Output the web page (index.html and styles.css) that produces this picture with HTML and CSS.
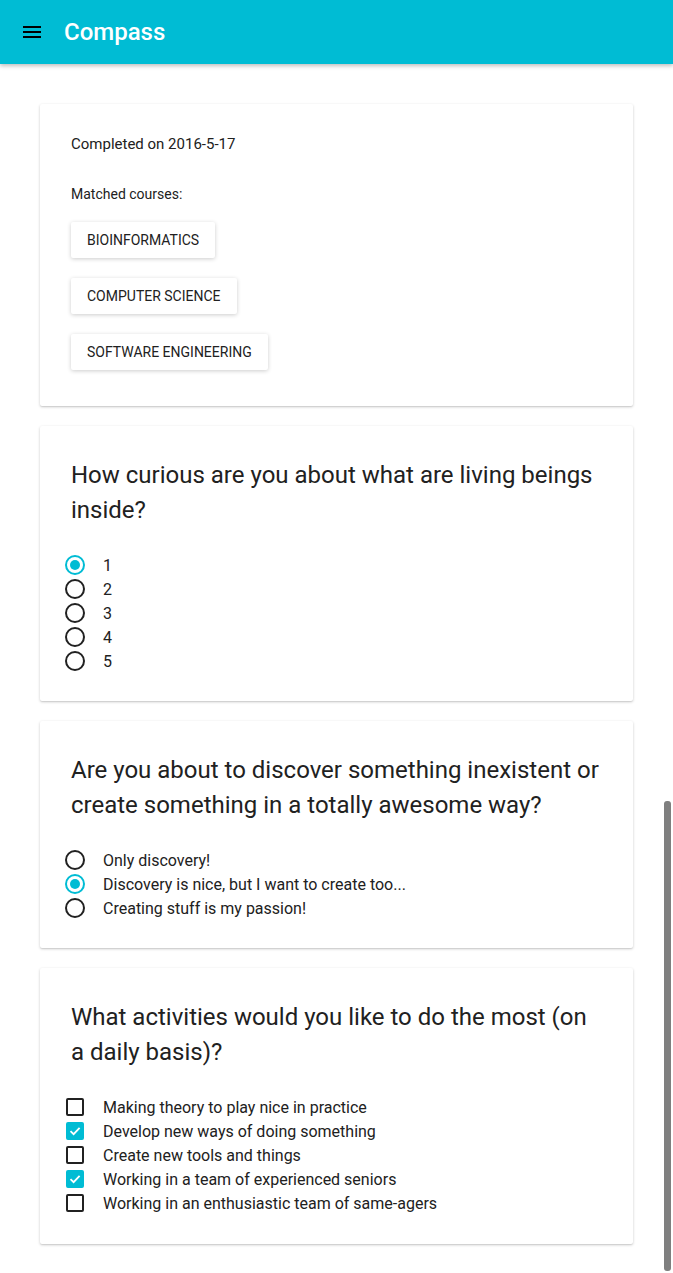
FILE: index.html
```html
<!DOCTYPE html>
<html>
<head>
<meta charset="utf-8">
<link rel="stylesheet" href="styles.css">
</head>
<body>
<header class="appbar">
  <svg class="menu" width="18" height="12" viewBox="0 0 18 12"><rect x="0" y="0" width="18" height="2" fill="#000"/><rect x="0" y="5" width="18" height="2" fill="#000"/><rect x="0" y="10" width="18" height="2" fill="#000"/></svg>
  <span class="title">Compass</span>
</header>
<main class="content">
  <section class="card summary">
    <p class="meta completed">Completed on 2016-5-17</p>
    <p class="meta matched">Matched courses:</p>
    <div class="courses">
      <span class="btn">BIOINFORMATICS</span>
      <span class="btn">COMPUTER SCIENCE</span>
      <span class="btn">SOFTWARE ENGINEERING</span>
    </div>
  </section>

  <section class="card">
    <h2 class="question">How curious are you about what are living beings inside?</h2>
    <ul class="options">
      <li><span class="radio on"></span>1</li>
      <li><span class="radio"></span>2</li>
      <li><span class="radio"></span>3</li>
      <li><span class="radio"></span>4</li>
      <li><span class="radio"></span>5</li>
    </ul>
  </section>

  <section class="card">
    <h2 class="question">Are you about to discover something inexistent or create something in a totally awesome way?</h2>
    <ul class="options">
      <li><span class="radio"></span>Only discovery!</li>
      <li><span class="radio on"></span>Discovery is nice, but I want to create too...</li>
      <li><span class="radio"></span>Creating stuff is my passion!</li>
    </ul>
  </section>

  <section class="card last">
    <h2 class="question">What activities would you like to do the most (on a daily basis)?</h2>
    <ul class="options">
      <li><span class="check"></span>Making theory to play nice in practice</li>
      <li><span class="check on"><svg width="14" height="14" viewBox="0 0 14 14"><path d="M2.5 7.2 L5.6 10.2 L11.6 3.8" fill="none" stroke="#fff" stroke-width="1.8"/></svg></span>Develop new ways of doing something</li>
      <li><span class="check"></span>Create new tools and things</li>
      <li><span class="check on"><svg width="14" height="14" viewBox="0 0 14 14"><path d="M2.5 7.2 L5.6 10.2 L11.6 3.8" fill="none" stroke="#fff" stroke-width="1.8"/></svg></span>Working in a team of experienced seniors</li>
      <li><span class="check"></span>Working in an enthusiastic team of same-agers</li>
    </ul>
  </section>
</main>
<div class="scroll-thumb"></div>
</body>
</html>
```
FILE: styles.css
```css
html, body {
  margin: 0;
  padding: 0;
  height: 1273px;
  overflow: hidden;
}
body {
  font-family: Roboto, "Noto Sans", "Liberation Sans", sans-serif;
  color: #212121;
  background: #fff;
  position: relative;
}
.appbar {
  height: 64px;
  background: #00bcd4;
  display: flex;
  align-items: center;
  padding-left: 23px;
  box-shadow: 0 2px 4px rgba(0,0,0,0.25);
  position: relative;
  z-index: 2;
}
.menu {
  display: block;
}
.title {
  color: #fff;
  font-size: 24px;
  font-weight: 500;
  margin-left: 23px;
  margin-top: -1px;
}
.content {
  padding: 40px 40px 0;
  display: flex;
  flex-direction: column;
  gap: 20px;
}
.card {
  background: #fff;
  border-radius: 2px;
  box-shadow: 0 1px 3px rgba(0,0,0,0.2), 0 1px 1px rgba(0,0,0,0.06);
  padding: 32px 31px 28px;
}
.card.last {
  padding-bottom: 29px;
}
.summary {
  padding-top: 30px;
  padding-bottom: 36px;
}
.meta {
  margin: 0;
  font-size: 14px;
  line-height: 20px;
}
.completed {
  font-size: 15px;
}
.matched {
  margin-top: 30px;
}
.courses {
  display: flex;
  flex-direction: column;
  align-items: flex-start;
  gap: 20px;
  margin-top: 18px;
}
.btn {
  height: 36px;
  line-height: 36px;
  padding: 0 16px;
  font-size: 14px;
  background: #fff;
  border-radius: 2px;
  box-shadow: 0 1px 4px rgba(0,0,0,0.2);
}
.question {
  margin: 0;
  font-size: 24px;
  font-weight: 400;
  line-height: 35px;
}
.options {
  list-style: none;
  margin: 25px 0 0;
  padding: 0;
}
.options li {
  height: 24px;
  display: flex;
  align-items: center;
  font-size: 16px;
}
.radio {
  width: 20px;
  height: 20px;
  box-sizing: border-box;
  border: 2px solid #212121;
  border-radius: 50%;
  margin: 0 18px 0 -6px;
  display: flex;
  align-items: center;
  justify-content: center;
}
.radio.on {
  border-color: #00bcd4;
}
.radio.on::after {
  content: "";
  width: 10px;
  height: 10px;
  border-radius: 50%;
  background: #00bcd4;
}
.check {
  width: 18px;
  height: 18px;
  box-sizing: border-box;
  border: 2px solid #212121;
  border-radius: 2px;
  margin: 0 19px 0 -5px;
  display: flex;
  align-items: center;
  justify-content: center;
}
.check.on {
  background: #00bcd4;
  border-color: #00bcd4;
}
.check svg {
  display: block;
}
.scroll-thumb {
  position: absolute;
  left: 664px;
  top: 801px;
  width: 7px;
  height: 470px;
  background: #7f7f7f;
  border-radius: 3px;
}
```
